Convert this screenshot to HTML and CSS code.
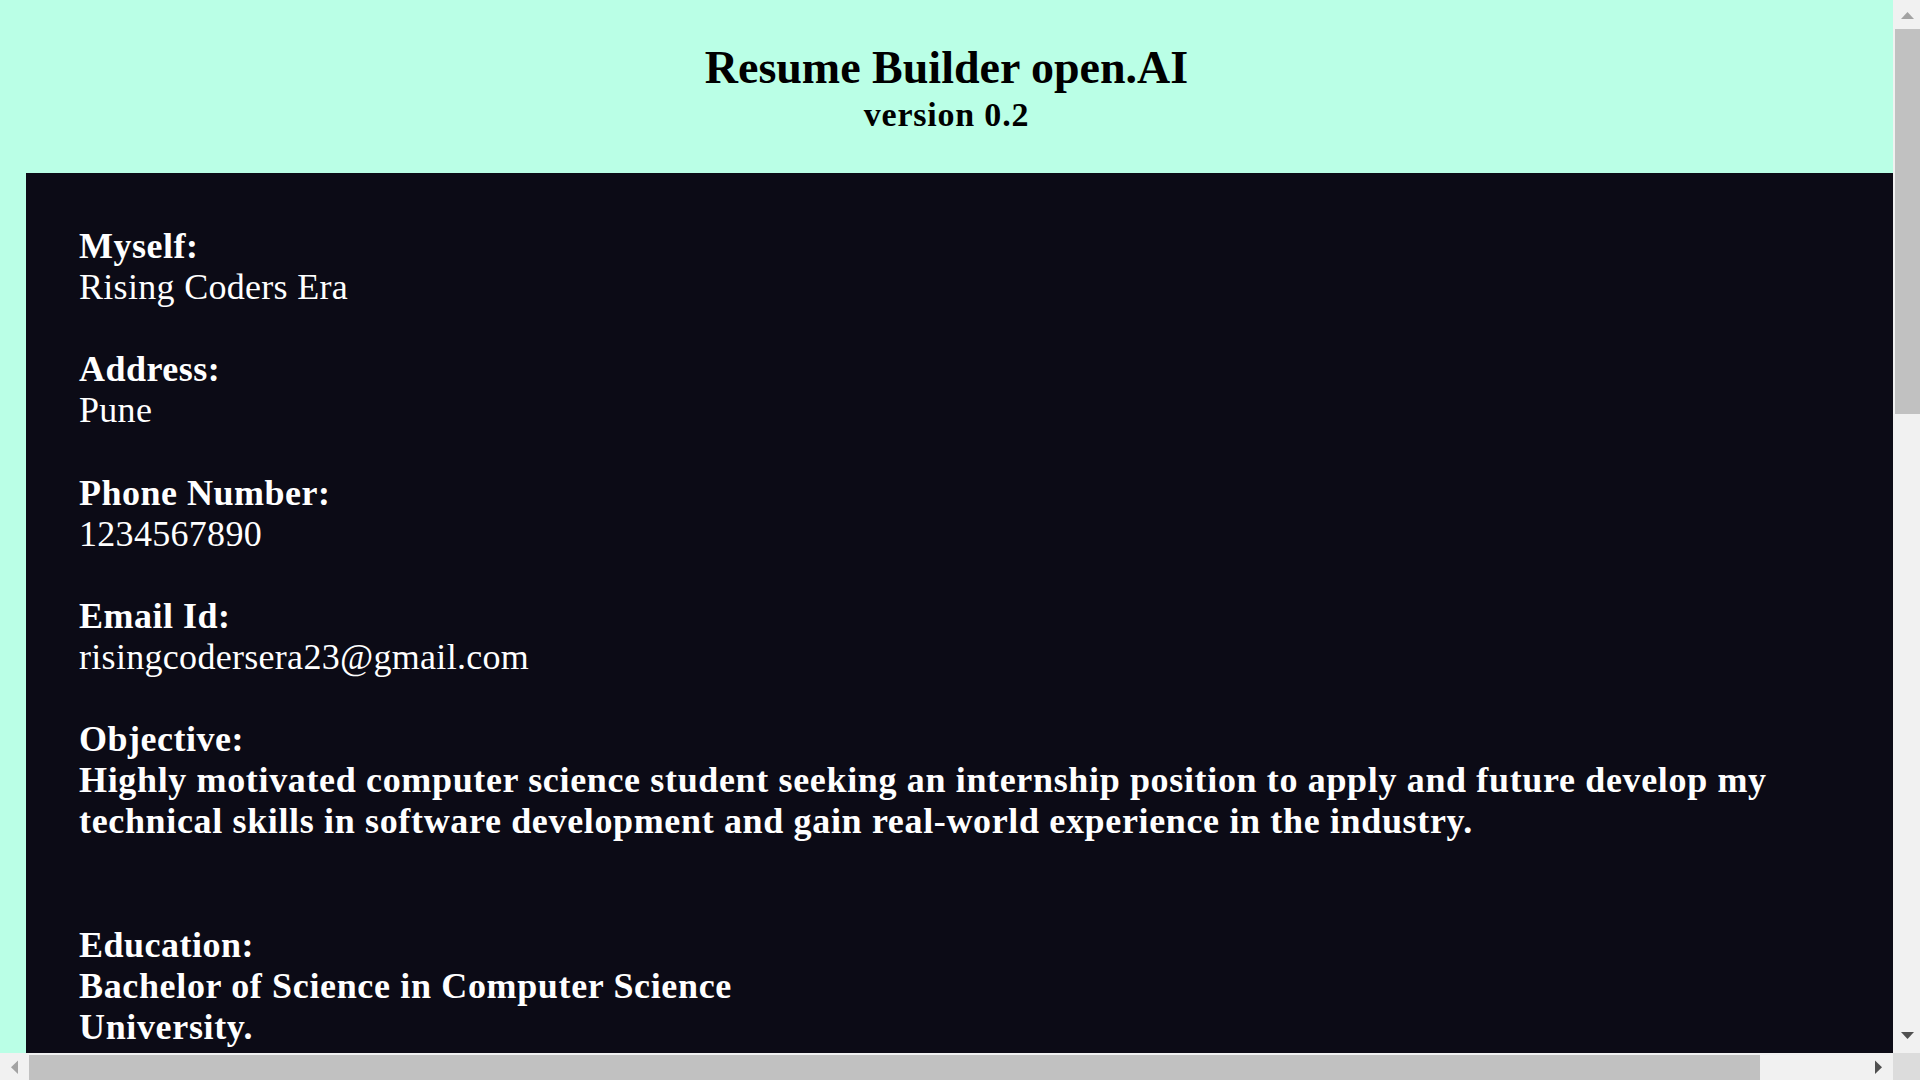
FILE: index.html
```html
<!DOCTYPE html>
<html lang="en">
<head>
<meta charset="utf-8">
<title>Resume Builder open.AI</title>
<link rel="stylesheet" href="styles.css">
</head>
<body>
<div class="screen">
  <div class="viewport">
    <header class="header">
      <h1 class="title">Resume Builder open.AI</h1>
      <h2 class="version">version 0.2</h2>
    </header>
    <main class="panel">
      <div class="content">
        <section class="field">
          <div class="label">Myself:</div>
          <div class="value">Rising Coders Era</div>
        </section>
        <section class="field">
          <div class="label">Address:</div>
          <div class="value">Pune</div>
        </section>
        <section class="field">
          <div class="label">Phone Number:</div>
          <div class="value">1234567890</div>
        </section>
        <section class="field">
          <div class="label">Email Id:</div>
          <div class="value">risingcodersera23@gmail.com</div>
        </section>
        <section class="field field-wide">
          <div class="label">Objective:</div>
          <div class="value strong">Highly motivated computer science student seeking an internship position to apply and future develop my technical skills in software development and gain real-world experience in the industry.</div>
        </section>
        <section class="field">
          <div class="label">Education:</div>
          <div class="value strong">Bachelor of Science in Computer Science</div>
          <div class="value strong">University.</div>
        </section>
      </div>
    </main>
  </div>
  <div class="vscroll">
    <div class="sb-btn"><svg width="27" height="27" viewBox="0 0 27 27"><polygon points="8,19 21,19 14.5,12" fill="#a3a3a3"/></svg></div>
    <div class="vtrack"><div class="vthumb"></div></div>
    <div class="sb-btn"><svg width="27" height="27" viewBox="0 0 27 27"><polygon points="8,6 21,6 14.5,13" fill="#505050"/></svg></div>
  </div>
  <div class="hscroll">
    <div class="sb-btn"><svg width="27" height="27" viewBox="0 0 27 27"><polygon points="18,7.5 18,21 11,14.25" fill="#a3a3a3"/></svg></div>
    <div class="htrack"><div class="hthumb"></div></div>
    <div class="sb-btn"><svg width="27" height="27" viewBox="0 0 27 27"><polygon points="9,7.5 9,21 16,14.25" fill="#505050"/></svg></div>
  </div>
  <div class="corner"></div>
</div>
</body>
</html>
```
FILE: styles.css
```css
html, body {
  margin: 0;
  padding: 0;
  height: 100%;
  overflow: hidden;
}

body {
  font-family: "Liberation Serif", "Times New Roman", serif;
}

.screen {
  display: grid;
  grid-template-columns: 1fr 27px;
  grid-template-rows: 1fr 27px;
  height: 100vh;
  width: 100vw;
}

.viewport {
  background: #baffe6;
  overflow: hidden;
  min-width: 0;
  min-height: 0;
}

.header {
  box-sizing: border-box;
  height: 173px;
  padding-top: 43px;
  text-align: center;
  color: #000;
}

.title {
  margin: 0;
  font-size: 46px;
  line-height: 50px;
  font-weight: bold;
}

.version {
  margin: 0;
  font-size: 34px;
  line-height: 43px;
  font-weight: bold;
  letter-spacing: 0.8px;
}

.panel {
  display: block;
  margin-left: 26px;
  width: calc(100% + 100px);
  min-height: 1200px;
  background: #0c0b16;
  color: #ffffff;
  padding: 53px 0 60px 53px;
  box-sizing: border-box;
}

.content {
  max-width: 1750px;
  font-size: 36px;
  line-height: 41.1px;
}

.field {
  margin-bottom: 41.1px;
}

.field-wide {
  margin-bottom: 82.2px;
}

.label {
  font-weight: bold;
  letter-spacing: 0.5px;
}

.value {
  letter-spacing: 0.3px;
}

.value.strong {
  font-weight: bold;
  letter-spacing: 0.65px;
}

/* scrollbars */
.vscroll {
  display: flex;
  flex-direction: column;
  background: #f1f1f1;
}

.hscroll {
  display: flex;
  flex-direction: row;
  background: #f1f1f1;
}

.sb-btn {
  flex: 0 0 27px;
  width: 27px;
  height: 27px;
}

.sb-btn svg {
  display: block;
}

.vtrack {
  flex: 1;
  padding: 2px 0 0 2px;
}

.vthumb {
  height: 385px;
  background: #c1c1c1;
}

.htrack {
  flex: 1;
  padding: 2px 0 0 2px;
}

.hthumb {
  width: 1731px;
  height: 100%;
  background: #c1c1c1;
}

.corner {
  background: #dcdcdc;
}
```
